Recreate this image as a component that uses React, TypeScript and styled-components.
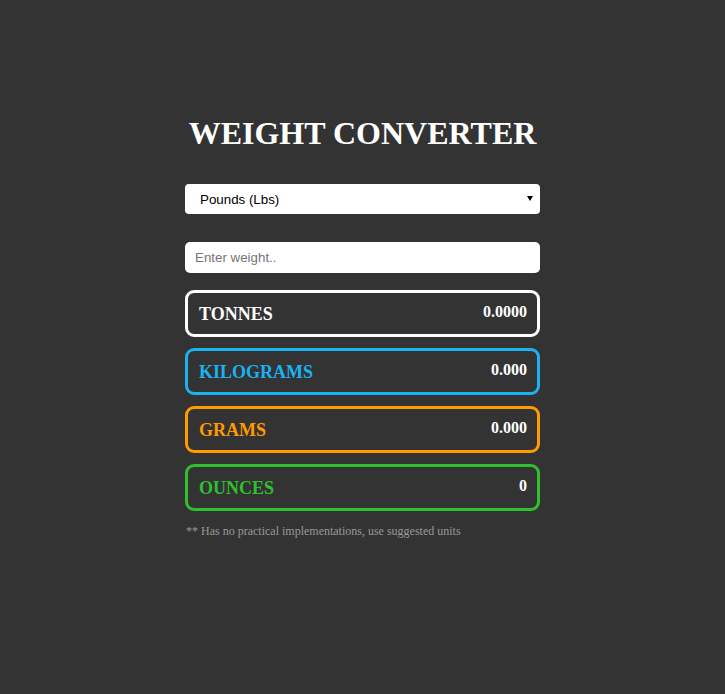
import React from "react";
import styled, { createGlobalStyle } from "styled-components";

const Global = createGlobalStyle`
  html, body { margin: 0; padding: 0; background: #333333; }
  body { font-family: "Liberation Serif", "Times New Roman", serif; }
`;

const Page = styled.div`
  min-height: 694px;
  background: #333333;
  display: flex;
  justify-content: center;
`;

const Container = styled.div`
  width: 355px;
  margin-top: 115px;
  display: flex;
  flex-direction: column;
`;

const Title = styled.h1`
  margin: 0;
  font-family: "Liberation Serif", "Times New Roman", serif;
  font-size: 32px;
  line-height: 37px;
  font-weight: bold;
  color: #ffffff;
  text-align: center;
`;

const SelectWrap = styled.div`
  position: relative;
  margin-top: 32px;
  height: 30px;
`;

const Select = styled.select`
  appearance: none;
  -webkit-appearance: none;
  width: 100%;
  height: 30px;
  border: none;
  border-radius: 4px;
  background: #ffffff;
  color: #000000;
  font-family: "Liberation Sans", Arial, sans-serif;
  font-size: 13.33px;
  padding: 0 0 0 15px;
  outline: none;
`;

const Arrow = styled.span`
  position: absolute;
  right: 7px;
  top: 12px;
  width: 0;
  height: 0;
  border-left: 3px solid transparent;
  border-right: 3px solid transparent;
  border-top: 5px solid #000000;
  pointer-events: none;
`;

const Input = styled.input`
  margin-top: 28px;
  height: 31px;
  box-sizing: border-box;
  width: 100%;
  border: none;
  border-radius: 5px;
  background: #ffffff;
  padding: 0 10px;
  font-family: "Liberation Sans", Arial, sans-serif;
  font-size: 13.33px;
  outline: none;
  &::placeholder { color: #757575; }
`;

const Cards = styled.div`
  margin-top: 17px;
  display: flex;
  flex-direction: column;
  gap: 11px;
`;

const Card = styled.div<{ $color: string }>`
  box-sizing: border-box;
  height: 47px;
  border: 3px solid ${(p) => p.$color};
  border-radius: 9px;
  display: flex;
  align-items: center;
  justify-content: space-between;
  padding: 0 10px 0 11px;
`;

const Label = styled.span<{ $color: string }>`
  color: ${(p) => p.$color};
  font-size: 18px;
  font-weight: bold;
  margin-top: 1px;
`;

const Value = styled.span`
  color: #ffffff;
  font-size: 16px;
  font-weight: bold;
  margin-bottom: 4px;
`;

const Note = styled.p`
  margin: 13px 0 0 1px;
  font-size: 12px;
  color: #999999;
  font-family: "Liberation Serif", "Times New Roman", serif;
`;

const units = [
  { name: "TONNES", value: "0.0000", color: "#ffffff" },
  { name: "KILOGRAMS", value: "0.000", color: "#1ab2f2" },
  { name: "GRAMS", value: "0.000", color: "#ff9a00" },
  { name: "OUNCES", value: "0", color: "#2ec12e" },
];

export default function App() {
  return (
    <Page>
      <Global />
      <Container>
        <Title>WEIGHT CONVERTER</Title>
        <SelectWrap>
          <Select defaultValue="lbs">
            <option value="lbs">Pounds (Lbs)</option>
          </Select>
          <Arrow />
        </SelectWrap>
        <Input placeholder="Enter weight.." />
        <Cards>
          {units.map((u) => (
            <Card key={u.name} $color={u.color}>
              <Label $color={u.color}>{u.name}</Label>
              <Value>{u.value}</Value>
            </Card>
          ))}
        </Cards>
        <Note>** Has no practical implementations, use suggested units</Note>
      </Container>
    </Page>
  );
}
